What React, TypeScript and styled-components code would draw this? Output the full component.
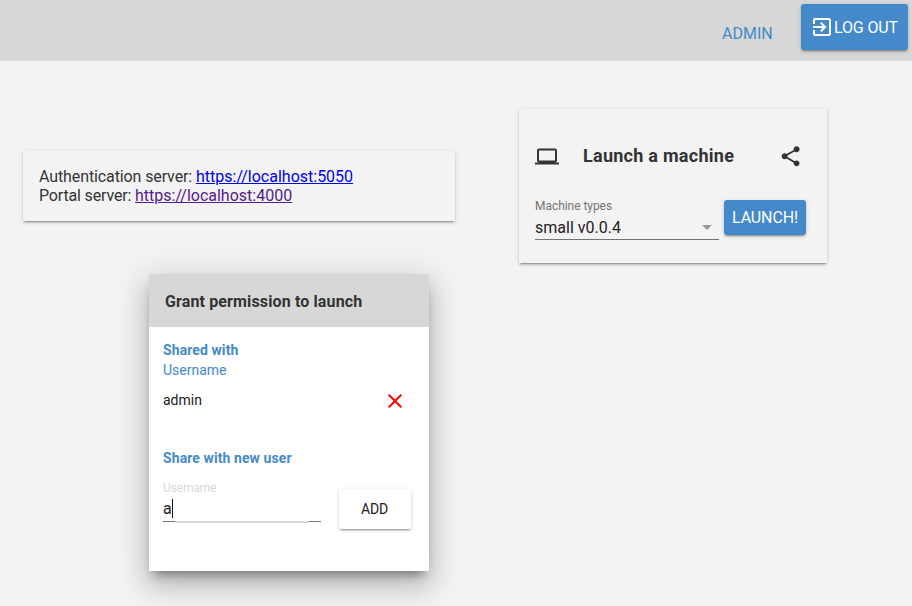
import React from 'react';
import styled, { createGlobalStyle } from 'styled-components';

const BLUE = '#448aca';
const raised = `
  box-shadow: 0 2px 2px 0 rgba(0, 0, 0, 0.14), 0 1px 5px 0 rgba(0, 0, 0, 0.12),
    0 3px 1px -2px rgba(0, 0, 0, 0.2);
`;

const GlobalStyle = createGlobalStyle`
  * { box-sizing: border-box; }
  html, body { margin: 0; height: 100%; overflow: hidden; }
  body { background: #f3f3f3; color: #333; font: 16px/19px Roboto, sans-serif; }
  button { font-family: inherit; }
`;

const Page = styled.div`
  position: relative;
  width: 912px;
  height: 606px;
  overflow: hidden;
`;

const TopBar = styled.header`
  display: flex;
  justify-content: flex-end;
  align-items: flex-start;
  height: 61px;
  padding: 4px 4px 0 0;
  background: #d7d7d7;
`;

const AdminLink = styled.a`
  width: 79px;
  margin: 20px 0 0;
  color: ${BLUE};
`;

const BlueButton = styled.button<{ $w: number; $h: number; $inset?: number }>`
  display: flex;
  align-items: center;
  justify-content: center;
  width: ${p => p.$w}px;
  height: ${p => p.$h}px;
  padding: 0 ${p => p.$inset ?? 0}px 0 0;
  border: 0;
  border-radius: 3px;
  background: ${BLUE};
  color: #fff;
  font-size: 16px;
  line-height: 19px;
  letter-spacing: -0.13px;
  white-space: nowrap;
  ${raised}
`;

const Content = styled.main`
  display: flex;
  align-items: flex-start;
  gap: 64px;
  padding: 48px 0 0 23px;
`;

const ServerCard = styled.section`
  width: 432px;
  height: 70px;
  margin-top: 42px;
  padding: 16px;
  ${raised}
`;

const ServerLabel = styled.span<{ $tracking: number }>`
  letter-spacing: ${p => p.$tracking}px;
`;

const ServerLink = styled.a<{ $visited?: boolean }>`
  color: ${p => (p.$visited ? '#551a8b' : '#0000ee')};
  text-decoration: underline;
`;

const LaunchCard = styled.section`
  width: 308px;
  height: 154px;
  padding: 35px 21px 0 16px;
  ${raised}
`;

const LaunchTitle = styled.div`
  display: flex;
  align-items: center;
  height: 24px;
  padding-right: 4px;
`;

const Heading = styled.h2`
  flex: 1;
  margin: 0 0 0 24px;
  font-size: 18px;
  line-height: 24px;
  font-weight: 700;
  letter-spacing: 0.27px;
`;

const LaunchRow = styled.div`
  display: flex;
  align-items: flex-start;
  gap: 5px;
  margin-top: 32px;
`;

const SelectField = styled.div`
  width: 184px;
  height: 41px;
  margin-top: -1px;
  border-bottom: 1px solid #747474;
`;

const FieldLabel = styled.div<{ $muted?: boolean }>`
  color: ${p => (p.$muted ? '#d7d7d7' : '#757575')};
  font-size: 12px;
  line-height: 14px;
  letter-spacing: ${p => (p.$muted ? -0.12 : -0.05)}px;
`;

const SelectValue = styled.div`
  display: flex;
  align-items: center;
  justify-content: space-between;
  height: 26px;
  padding: 3px 7px 0 0;
  color: #212121;
`;

const Caret = styled.span`
  border: 5px solid transparent;
  border-top-color: #999;
  border-bottom: 0;
`;

const Dialog = styled.section`
  position: absolute;
  left: 149px;
  top: 274px;
  width: 280px;
  height: 297px;
  background: #fff;
  color: #212121;
  font-size: 14px;
  box-shadow: 0 16px 24px 2px rgba(0, 0, 0, 0.14), 0 6px 30px 5px rgba(0, 0, 0, 0.12),
    0 8px 10px -5px rgba(0, 0, 0, 0.4);
`;

const DialogHeader = styled.h3`
  display: flex;
  align-items: center;
  height: 53px;
  margin: 0;
  padding: 1px 16px 0;
  background: #d7d7d7;
  color: #333;
  font-size: 16px;
  font-weight: 700;
  letter-spacing: 0.13px;
`;

const DialogBody = styled.div`
  padding: 13px 14px;
`;

const Subheading = styled.h4`
  margin: 0;
  color: ${BLUE};
  font-size: 14px;
  line-height: 20px;
  font-weight: 700;
  letter-spacing: 0.09px;
`;

const ColumnLabel = styled.div`
  color: ${BLUE};
  line-height: 20px;
`;

const UserRow = styled.div`
  display: flex;
  align-items: center;
  justify-content: space-between;
  height: 40px;
  margin-bottom: 28px;
  padding-right: 8px;
`;

const RemoveButton = styled.span`
  display: flex;
  padding-top: 2px;
`;

const ShareRow = styled.div`
  display: flex;
  align-items: flex-start;
  justify-content: space-between;
  padding: 13px 4px 0 0;
`;

const TextField = styled.div`
  width: 158px;
`;

const InputLine = styled.div`
  display: flex;
  align-items: center;
  height: 27px;
  padding-top: 1px;
  border-bottom: 1px solid #747474;
`;

const Typed = styled.span`
  font-size: 16px;
`;

const TextCursor = styled.i`
  width: 1px;
  height: 19px;
  background: #111;
`;

const FocusRipple = styled.div`
  height: 2px;
  margin: -1px 12px 0;
  background: #d7d7d7;
`;

const AddButton = styled.button`
  width: 72px;
  height: 40px;
  margin-top: 8px;
  padding: 0 1px 0 0;
  border: 0;
  border-radius: 3px;
  background: #fff;
  color: #212121;
  font-size: 14px;
  letter-spacing: -0.1px;
  ${raised}
`;

const paths = {
  exit: 'M10.09 15.59L11.5 17l5-5-5-5-1.41 1.41L12.67 11H3v2h9.67l-2.58 2.59zM19 3H5c-1.11 0-2 .9-2 2v4h2V5h14v14H5v-4H3v4c0 1.1.89 2 2 2h14c1.1 0 2-.9 2-2V5c0-1.1-.9-2-2-2z',
  laptop: 'M20 18c1.1 0 1.99-.9 1.99-2L22 6c0-1.1-.9-2-2-2H4c-1.1 0-2 .9-2 2v10c0 1.1.9 2 2 2H0v2h24v-2h-4zM4 6h16v10H4V6z',
  share: 'M18 16.08c-.76 0-1.44.3-1.96.77L8.91 12.7c.05-.23.09-.46.09-.7s-.04-.47-.09-.7l7.05-4.11c.54.5 1.25.81 2.04.81 1.66 0 3-1.34 3-3s-1.34-3-3-3-3 1.34-3 3c0 .24.04.47.09.7L8.04 9.81C7.5 9.31 6.79 9 6 9c-1.66 0-3 1.34-3 3s1.34 3 3 3c.79 0 1.5-.31 2.04-.81l7.12 4.16c-.05.21-.08.43-.08.65 0 1.61 1.31 2.92 2.92 2.92s2.92-1.31 2.92-2.92-1.31-2.92-2.92-2.92z',
  close: 'M19 6.41L17.59 5 12 10.59 6.41 5 5 6.41 10.59 12 5 17.59 6.41 19 12 13.41 17.59 19 19 17.59 13.41 12z',
};

interface IconProps {
  name: keyof typeof paths;
  color?: string;
  dx?: number;
  dy?: number;
}

const Icon = ({ name, color = 'currentColor', dx = 0, dy = 0 }: IconProps) => (
  <svg width="24" height="24" viewBox={`${-dx} ${-dy} 24 24`} fill={color}>
    <path d={paths[name]} />
  </svg>
);

export default function App() {
  return (
    <Page>
      <GlobalStyle />
      <TopBar>
        <AdminLink>ADMIN</AdminLink>
        <BlueButton $w={107} $h={46} $inset={1}>
          <Icon name="exit" />
          LOG OUT
        </BlueButton>
      </TopBar>
      <Content>
        <ServerCard>
          <div>
            <ServerLabel $tracking={-0.11}>Authentication server: </ServerLabel>
            <ServerLink>https://localhost:5050</ServerLink>
          </div>
          <div>
            <ServerLabel $tracking={-0.16}>Portal server: </ServerLabel>
            <ServerLink $visited>https://localhost:4000</ServerLink>
          </div>
        </ServerCard>
        <LaunchCard>
          <LaunchTitle>
            <Icon name="laptop" dy={0.5} />
            <Heading>Launch a machine</Heading>
            <Icon name="share" dx={0.6} dy={0.3} />
          </LaunchTitle>
          <LaunchRow>
            <SelectField>
              <FieldLabel>Machine types</FieldLabel>
              <SelectValue>
                small v0.0.4
                <Caret />
              </SelectValue>
            </SelectField>
            <BlueButton $w={82} $h={35}>LAUNCH!</BlueButton>
          </LaunchRow>
        </LaunchCard>
      </Content>
      <Dialog role="dialog">
        <DialogHeader>Grant permission to launch</DialogHeader>
        <DialogBody>
          <Subheading>Shared with</Subheading>
          <ColumnLabel>Username</ColumnLabel>
          <UserRow>
            admin
            <RemoveButton>
              <Icon name="close" color="#f00" />
            </RemoveButton>
          </UserRow>
          <Subheading>Share with new user</Subheading>
          <ShareRow>
            <TextField>
              <FieldLabel $muted>Username</FieldLabel>
              <InputLine>
                <Typed>a</Typed>
                <TextCursor />
              </InputLine>
              <FocusRipple />
            </TextField>
            <AddButton>ADD</AddButton>
          </ShareRow>
        </DialogBody>
      </Dialog>
    </Page>
  );
}
